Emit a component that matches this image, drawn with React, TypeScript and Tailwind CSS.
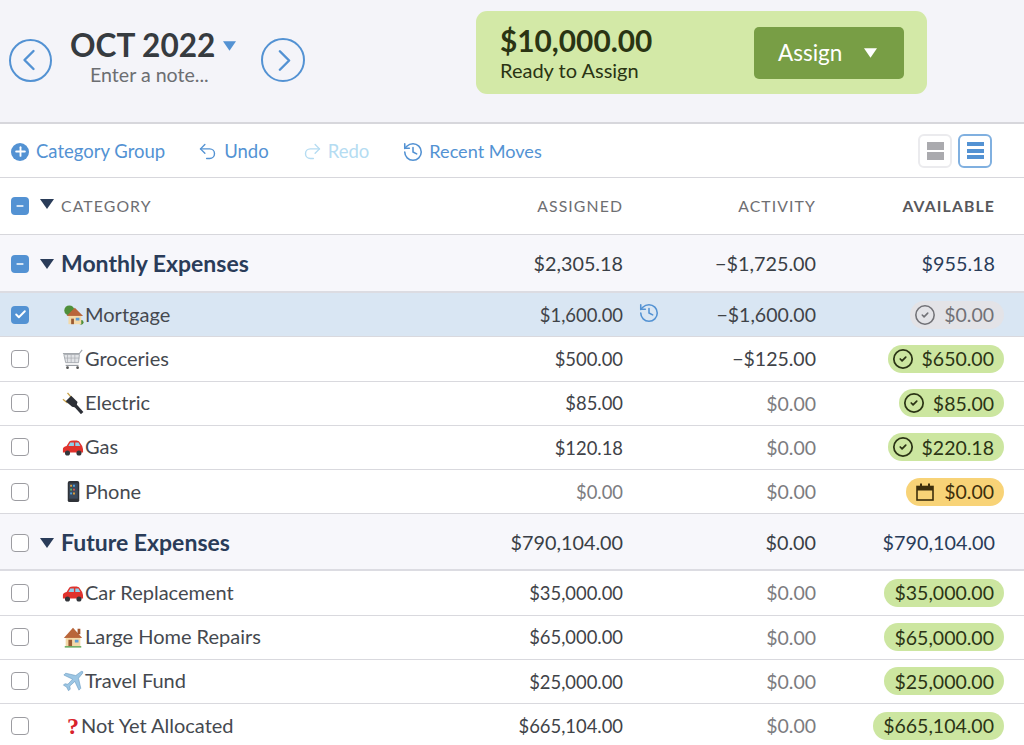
import { Check, CircleCheck, History, Undo2, Redo2, Plus, ChevronLeft, ChevronRight, Minus } from "lucide-react";
import type { ReactNode } from "react";

type Pill = "gray" | "green" | "amber" | "none";

type Row = {
  icon: ReactNode;
  name: string;
  assigned: string;
  activity: string;
  available: string;
  pill: Pill;
  selected?: boolean;
  assignedMuted?: boolean;
  activityMuted?: boolean;
};

function HouseTree() {
  return (
    <svg viewBox="0 0 24 24" className="size-[22px] shrink-0">
      <circle cx="8" cy="7" r="5.5" fill="#4f8f3a" />
      <circle cx="21" cy="20" r="2.5" fill="#4f8f3a" />
      <path d="M14 4 L23 13 L5 13 Z" fill="#b9653a" />
      <rect x="7" y="13" width="14" height="9" fill="#f4d9a8" />
      <rect x="10" y="16" width="3" height="6" fill="#9a5a32" />
      <rect x="15" y="15" width="4" height="3" fill="#5a9bd5" />
    </svg>
  );
}

function Cart() {
  return (
    <svg viewBox="0 0 24 24" className="size-[22px] shrink-0" fill="none">
      <path d="M1 6 H19 L22 2" stroke="#a4a8ae" strokeWidth="1.3" />
      <path d="M2 7 L4 16 H18 L19 7 Z" fill="#e2e4e7" stroke="#a4a8ae" />
      <path d="M6 7 V16 M10 7 V16 M14 7 V16 M3 11 H19" stroke="#a4a8ae" strokeWidth="0.7" />
      <path d="M4 19 H18" stroke="#9a9ea4" strokeWidth="1.3" />
      <circle cx="6" cy="21.5" r="1.5" fill="#555" />
      <circle cx="17" cy="21.5" r="1.5" fill="#555" />
    </svg>
  );
}

function Plug() {
  return (
    <svg viewBox="0 0 24 24" className="size-[22px] shrink-0" fill="none">
      <path d="M6 1 L11 7 M1 8 L6 12" stroke="#c9a24a" strokeWidth="1.5" />
      <path d="M10 4 L17 11 L15 17 L11 16 L4 10 Z" fill="#2c2f36" />
      <path d="M13 13 L22 23" stroke="#2c2f36" strokeWidth="3.6" />
    </svg>
  );
}

function Car() {
  return (
    <svg viewBox="0 0 24 24" className="size-[22px] shrink-0">
      <path d="M1 18 V14 Q1 12 5 11 L8 6 Q9 5 12 5 H16 Q19 5 20 8 L22 11 Q23 13 23 18 Z" fill="#e0322c" />
      <path d="M9 7 H13 V11 H7 Z M14.500 7 H18 L20 11 H14.500 Z" fill="#8fd0ea" />
      <circle cx="6" cy="18.500" r="2.800" fill="#33363b" />
      <circle cx="18.500" cy="18.500" r="2.800" fill="#33363b" />
    </svg>
  );
}

function Phone() {
  return (
    <svg viewBox="0 0 24 24" className="size-[23px] shrink-0">
      <rect x="6" y="1" width="12" height="22" rx="2" fill="#2f3238" />
      <rect x="7.500" y="3.500" width="9" height="16" fill="#3c4a5c" />
      <path d="M8.500 5 h2 v2 h-2 z" fill="#e0a13a" />
      <path d="M11.500 5 h2 v2 h-2 z" fill="#4fa3e0" />
      <path d="M8.500 9 h2 v2 h-2 z" fill="#58b368" />
      <path d="M11.500 9 h2 v2 h-2 z" fill="#d9534f" />
      <path d="M8.500 13 h2 v2 h-2 z" fill="#4fa3e0" />
      <path d="M11.500 13 h2 v2 h-2 z" fill="#e0a13a" />
    </svg>
  );
}

function Home() {
  return (
    <svg viewBox="0 0 24 24" className="size-[22px] shrink-0">
      <path d="M12 2 L22 13 H2 Z" fill="#b9653a" />
      <rect x="17" y="3" width="3" height="6" fill="#a3562f" />
      <rect x="4" y="13" width="16" height="9" fill="#f4d9a8" />
      <rect x="7" y="15" width="4" height="7" fill="#9a5a32" />
      <rect x="14" y="15" width="4" height="3" fill="#5a9bd5" />
      <rect x="3" y="22" width="18" height="1.500" fill="#58a14e" />
    </svg>
  );
}

function Plane() {
  return (
    <svg viewBox="0 0 24 24" className="size-[22px] shrink-0">
      <path d="M21 1.500 Q23.500 1 22.500 3.500 L18 9 L20.500 20 L18.500 22 L14 12.500 L8.500 17.500 L9 21 L7 22.500 L5 18.500 L1.500 16.500 L3 15 L6.500 15.500 L11.500 10 L2 5.500 L4 3.500 L15 6 Z" fill="#9cc6e4" stroke="#5f93bb" strokeWidth="0.6" />
    </svg>
  );
}

function Question() {
  return (
    <span className="w-[21px] shrink-0 text-center text-[24px] leading-none font-bold text-[#d8222a] [font-family:'Liberation_Serif',serif]">?</span>
  );
}

function CalendarFilled() {
  return (
    <svg viewBox="0 0 18 18" className="size-[18px] shrink-0 text-[#3d2f0c]" fill="none">
      <rect x="1" y="3.5" width="16" height="13.500" stroke="currentColor" strokeWidth="1.600" />
      <rect x="1" y="3" width="16" height="4.500" fill="currentColor" />
      <path d="M5 0.500 V4 M13 0.500 V4" stroke="currentColor" strokeWidth="2" />
    </svg>
  );
}

const monthly: Row[] = [
  { icon: <HouseTree />, name: "Mortgage", assigned: "$1,600.00", activity: "−$1,600.00", available: "$0.00", pill: "gray", selected: true },
  { icon: <Cart />, name: "Groceries", assigned: "$500.00", activity: "−$125.00", available: "$650.00", pill: "green" },
  { icon: <Plug />, name: "Electric", assigned: "$85.00", activity: "$0.00", available: "$85.00", pill: "green", activityMuted: true },
  { icon: <Car />, name: "Gas", assigned: "$120.18", activity: "$0.00", available: "$220.18", pill: "green", activityMuted: true },
  { icon: <Phone />, name: "Phone", assigned: "$0.00", activity: "$0.00", available: "$0.00", pill: "amber", assignedMuted: true, activityMuted: true },
];

const future: Row[] = [
  { icon: <Car />, name: "Car Replacement", assigned: "$35,000.00", activity: "$0.00", available: "$35,000.00", pill: "none", activityMuted: true },
  { icon: <Home />, name: "Large Home Repairs", assigned: "$65,000.00", activity: "$0.00", available: "$65,000.00", pill: "none", activityMuted: true },
  { icon: <Plane />, name: "Travel Fund", assigned: "$25,000.00", activity: "$0.00", available: "$25,000.00", pill: "none", activityMuted: true },
  { icon: <Question />, name: "Not Yet Allocated", assigned: "$665,104.00", activity: "$0.00", available: "$665,104.00", pill: "none", activityMuted: true },
];

function Box({ state }: { state: "off" | "on" | "mixed" }) {
  if (state === "off") {
    return <span className="block size-[18px] shrink-0 rounded-[4px] border-[1.5px] border-[#9c9ca1] bg-white" />;
  }
  return (
    <span className="flex size-[18px] shrink-0 items-center justify-center rounded-[4px] bg-[#5392d3] text-white">
      {state === "on" ? <Check size={13} strokeWidth={3.5} /> : <Minus size={10} strokeWidth={3.5} />}
    </span>
  );
}

function Caret({ className }: { className: string }) {
  return (
    <svg viewBox="0 0 14 10" className={className}>
      <path d="M0 0 H14 L7 10 Z" fill="currentColor" />
    </svg>
  );
}

function Balance({ row }: { row: Row }) {
  if (row.pill === "gray") {
    return (
      <span className="flex h-7 items-center gap-[8px] rounded-full bg-[#e3e3e7] pr-[10px] pl-[4px] text-[#717176]">
        <CircleCheck size={22} strokeWidth={1.7} />
        {row.available}
      </span>
    );
  }
  if (row.pill === "amber") {
    return (
      <span className="flex h-7 items-center gap-[10px] rounded-full bg-[#f8d377] pr-[10px] pl-[10px] text-[#3d2f0c]">
        <CalendarFilled />
        {row.available}
      </span>
    );
  }
  if (row.pill === "green") {
    return (
      <span className="flex h-7 items-center gap-[8px] rounded-full bg-[#cce6a0] pr-[10px] pl-[4px] text-[#2b3415]">
        <CircleCheck size={22} strokeWidth={1.9} />
        {row.available}
      </span>
    );
  }
  return <span className="flex h-7 items-center rounded-full bg-[#cce6a0] px-[10px] text-[#2b3415]">{row.available}</span>;
}

function CategoryRow({ row }: { row: Row }) {
  return (
    <div className={`flex h-[44.25px] items-center border-b-[1.5px] border-[#d9d9de] pl-[11px] text-[19.5px] ${row.selected ? "bg-[#d9e6f3]" : "bg-white"}`}>
      <Box state={row.selected ? "on" : "off"} />
      <div className="ml-[32px] flex w-[342px] items-center text-[20px] text-[#45494f]">
        <span className="flex w-[24px] justify-center">{row.icon}</span>
        <span className={`-mt-[2px] ${row.name === "Not Yet Allocated" ? "-ml-[4px]" : ""}`}>{row.name}</span>
      </div>
      <div className={`w-[220px] pt-[2px] text-right text-[18.4px] ${row.assignedMuted ? "text-[#7c7c80]" : "text-[#3f4348]"}`}>{row.assigned}</div>
      <div className="relative w-[193px] text-right">
        {row.selected && <History size={22} strokeWidth={1.7} className="absolute top-[2px] left-[15px] text-[#5392d3]" />}
        <span className={row.activityMuted ? "text-[#7c7c80]" : "text-[#3f4348]"}>{row.activity}</span>
      </div>
      <div className="flex flex-1 justify-end pr-[20px]">
        <Balance row={row} />
      </div>
    </div>
  );
}

function GroupRow({ name, state, assigned, activity, available, height }: { name: string; state: "off" | "mixed"; assigned: string; activity: string; available: string; height: string }) {
  return (
    <div className={`flex items-center border-b-2 border-[#dcdce2] bg-[#f7f7fb] pt-[2px] pl-[11px] text-[#2a3c59] ${height}`}>
      <Box state={state} />
      <Caret className="ml-[11px] h-[10px] w-[14px] text-[#2a3c59]" />
      <div className="-mt-[2px] ml-[7px] w-[342px] text-[23px] font-bold">{name}</div>
      <div className="w-[220px] text-right text-[19.8px] text-[#3a3f46]">{assigned}</div>
      <div className="w-[193px] text-right text-[19.8px] text-[#3a3f46]">{activity}</div>
      <div className="flex-1 pr-[29px] text-right text-[19.8px]">{available}</div>
    </div>
  );
}

export default function App() {
  return (
    <div className="h-[745px] w-[1024px] overflow-hidden bg-white text-[#3f4348] [font-family:Lato,'Noto_Sans',sans-serif]">
      {/* Month header */}
      <div className="flex h-[124px] border-b-2 border-[#d7d7dc] bg-[#f4f4f9] pl-[9px]">
        <div className="flex h-[120px] items-center">
          <span className="flex size-[43px] items-center justify-center rounded-full border-[2.5px] border-[#5392d3] text-[#5392d3]">
            <ChevronLeft size={36} strokeWidth={1.6} className="-ml-[3px]" />
          </span>
          <div className="mb-[7px] ml-[18px] flex w-[189px] flex-col">
            <div className="flex items-center text-[31.6px] leading-[36px] font-bold text-[#363b40]">
              OCT 2022
              <Caret className="mt-[3px] ml-[8px] h-[10px] w-[13px] text-[#5392d3]" />
            </div>
            <div className="ml-[20px] text-[19.6px] leading-[24px] text-[#6c6e72]">Enter a note...</div>
          </div>
          <span className="ml-[2px] flex size-[44px] items-center justify-center rounded-full border-[2.5px] border-[#5392d3] text-[#5392d3]">
            <ChevronRight size={37} strokeWidth={1.6} className="-mr-[3px]" />
          </span>
        </div>
        <div className="mt-[11px] ml-[171px] flex h-[83px] w-[451px] items-center justify-between rounded-[11px] bg-[#d3e9a7] pr-[23px] pl-[24px] text-[#2a3413]">
          <div className="flex flex-col">
            <span className="text-[29.8px] leading-[34px] font-bold">$10,000.00</span>
            <span className="text-[20px] leading-[24px]">Ready to Assign</span>
          </div>
          <button className="flex h-[52px] w-[150px] items-center rounded-[5px] bg-[#789e45] pl-[24px] text-[22.5px] text-white">
            Assign
            <Caret className="ml-[22px] h-[10px] w-[13px] text-white" />
          </button>
        </div>
      </div>

      {/* Toolbar */}
      <div className="flex h-[54px] items-center border-b-[1.5px] border-[#d7d7dc] pt-[2px] pr-[32px] pl-[11px] text-[18.5px] text-[#5392d3]">
        <span className="flex size-[18px] items-center justify-center rounded-full bg-[#5392d3] text-white">
          <Plus size={15} strokeWidth={3} />
        </span>
        <span className="ml-[7px]">Category Group</span>
        <Undo2 size={21} strokeWidth={1.6} className="ml-[32px]" />
        <span className="ml-[6px]">Undo</span>
        <Redo2 size={21} strokeWidth={1.6} className="ml-[33px] text-[#b5dcf2]" />
        <span className="ml-[5px] text-[#b5dcf2]">Redo</span>
        <History size={22} strokeWidth={1.7} className="ml-[33px]" />
        <span className="ml-[5px] text-[18.1px]">Recent Moves</span>
        <div className="-mt-[2px] ml-auto flex gap-[6px]">
          <span className="flex size-[34px] flex-col items-center justify-center gap-[2px] rounded-[6px] border-2 border-[#ebebee]">
            <span className="h-[8px] w-[17px] bg-[#aaaaae]" />
            <span className="h-[8px] w-[17px] bg-[#aaaaae]" />
          </span>
          <span className="flex size-[34px] flex-col items-center justify-center gap-[2.5px] rounded-[6px] border-2 border-[#80b0e0]">
            <span className="h-[4px] w-[17px] bg-[#5392d3]" />
            <span className="h-[4px] w-[17px] bg-[#5392d3]" />
            <span className="h-[4px] w-[17px] bg-[#5392d3]" />
          </span>
        </div>
      </div>

      {/* Column headers */}
      <div className="flex h-[57px] items-center border-b-[1.5px] border-[#d7d7dc] pl-[11px] text-[15.8px] tracking-[1.1px] text-[#6e6e72]">
        <Box state="mixed" />
        <Caret className="mt-[-4px] ml-[11px] h-[10px] w-[14px] text-[#2a3c59]" />
        <div className="ml-[7px] w-[342px]">CATEGORY</div>
        <div className="w-[220px] text-right">ASSIGNED</div>
        <div className="w-[193px] text-right">ACTIVITY</div>
        <div className="flex-1 pr-[29px] text-right font-bold text-[#57575b]">AVAILABLE</div>
      </div>

      <GroupRow name="Monthly Expenses" state="mixed" assigned="$2,305.18" activity="−$1,725.00" available="$955.18" height="h-[58px]" />
      {monthly.map((row) => (
        <CategoryRow key={row.name} row={row} />
      ))}
      <GroupRow name="Future Expenses" state="off" assigned="$790,104.00" activity="$0.00" available="$790,104.00" height="h-[57px]" />
      {future.map((row) => (
        <CategoryRow key={row.name} row={row} />
      ))}
    </div>
  );
}
